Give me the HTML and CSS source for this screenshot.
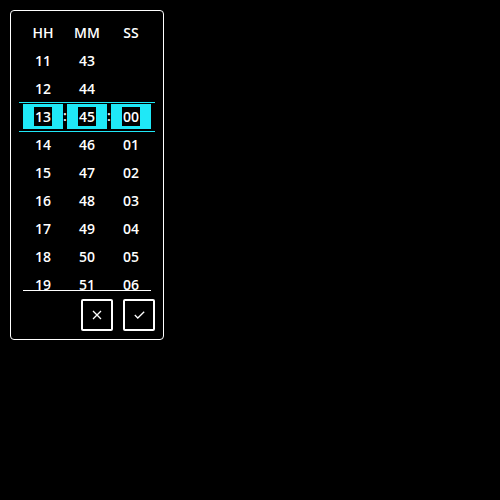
FILE: index.html
```html
<!DOCTYPE html>
<html lang="en">
<head>
<meta charset="utf-8">
<title>Time picker</title>
<link rel="stylesheet" href="styles.css">
</head>
<body>
<div class="picker">
  <div class="row head">
    <span>HH</span><span>MM</span><span>SS</span>
  </div>
  <div class="list">
    <div class="row"><span>11</span><span>43</span><span></span></div>
    <div class="row"><span>12</span><span>44</span><span></span></div>
    <div class="row selected">
      <span class="box"><span class="val">13</span></span>
      <span class="colon">:</span>
      <span class="box"><span class="val">45</span></span>
      <span class="colon">:</span>
      <span class="box"><span class="val">00</span></span>
    </div>
    <div class="row"><span>14</span><span>46</span><span>01</span></div>
    <div class="row"><span>15</span><span>47</span><span>02</span></div>
    <div class="row"><span>16</span><span>48</span><span>03</span></div>
    <div class="row"><span>17</span><span>49</span><span>04</span></div>
    <div class="row"><span>18</span><span>50</span><span>05</span></div>
    <div class="row"><span>19</span><span>51</span><span>06</span></div>
  </div>
  <div class="rule"></div>
  <div class="actions">
    <button class="btn" type="button" aria-label="Cancel">
      <svg width="10" height="10" viewBox="0 0 10 10"><path d="M1 1 L9 9 M9 1 L1 9" stroke="#fff" stroke-width="1.3" fill="none"/></svg>
    </button>
    <button class="btn" type="button" aria-label="OK">
      <svg width="11" height="8" viewBox="0 0 11 8"><path d="M0.8 4 L3.8 7 L10.2 0.8" stroke="#fff" stroke-width="1.3" fill="none"/></svg>
    </button>
  </div>
</div>
</body>
</html>
```

FILE: styles.css
```css
html, body {
  margin: 0;
  padding: 0;
  background: #000;
}
body {
  padding: 10px;
  font-family: "Open Sans", "Noto Sans", sans-serif;
  font-size: 14px;
  font-weight: 600;
  color: #fff;
}
.picker {
  box-sizing: border-box;
  width: 154px;
  height: 330px;
  border: 1px solid #fff;
  border-radius: 4px;
  padding: 8px;
  display: flex;
  flex-direction: column;
}
.row {
  display: grid;
  grid-template-columns: repeat(3, 44px);
  padding: 0 2px;
  height: 28px;
  line-height: 28px;
  text-align: center;
}
.list {
  height: 243px;
  overflow: hidden;
}
.row.selected {
  display: flex;
  align-items: flex-start;
  padding: 0 4px;
  height: 28px;
  margin: -1px 0;
  border-top: 1px solid #1fe8f7;
  border-bottom: 1px solid #1fe8f7;
}
.box {
  width: 40px;
  height: 25px;
  margin-top: 1px;
  background: #1fe8f7;
  display: flex;
  align-items: center;
  justify-content: center;
}
.val {
  background: #000;
  color: #fff;
  line-height: 19px;
  padding: 0 1px;
}
.colon {
  width: 4px;
  line-height: 28px;
  text-align: center;
  margin-top: -1px;
}
.rule {
  height: 1px;
  background: #fff;
  margin: 0 4px;
}
.actions {
  display: flex;
  justify-content: flex-end;
  gap: 10px;
  margin-top: 8px;
}
.btn {
  box-sizing: border-box;
  width: 32px;
  height: 32px;
  padding: 0;
  background: #000;
  border: 2px solid #fff;
  border-radius: 2px;
  display: flex;
  align-items: center;
  justify-content: center;
}
```
